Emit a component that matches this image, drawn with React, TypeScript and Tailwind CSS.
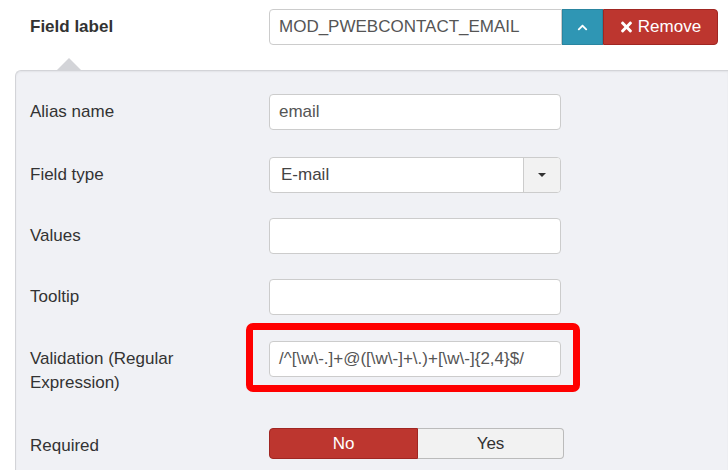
import React from "react";
import { FaChevronUp, FaTimes } from "react-icons/fa";

const font = { fontFamily: '"Liberation Sans", Arial, sans-serif' };

function Row({
  label,
  children,
  className = "",
}: {
  label: React.ReactNode;
  children: React.ReactNode;
  className?: string;
}) {
  return (
    <div className={`flex items-start ${className}`}>
      <label className="w-[239px] shrink-0 pr-[40px] pt-[6px] text-[17px] leading-[24px] text-[#333]">
        {label}
      </label>
      <div className="w-[292px] shrink-0">{children}</div>
    </div>
  );
}

function TextInput({ value = "" }: { value?: string }) {
  return (
    <div className="h-[36px] w-full rounded-[4px] border border-[#ccc] bg-white px-[9px] text-[17px] leading-[34px] text-[#555]">
      {value}
    </div>
  );
}

export default function App() {
  return (
    <div
      className="h-[470px] w-[728px] overflow-hidden bg-white"
      style={font}
    >
      {/* Field label header */}
      <div className="flex items-center pt-[9px] pl-[30px]">
        <div className="w-[239px] text-[17px] font-bold text-[#333]">
          Field label
        </div>
        <div className="flex h-[36px]">
          <div className="w-[293px] rounded-l-[4px] border border-[#ccc] bg-white pl-[9px] text-[17px] leading-[34px] text-[#555]">
            MOD_PWEBCONTACT_EMAIL
          </div>
          <button className="flex w-[41px] items-center justify-center border border-[#2a85a0] bg-[#2f96b4] text-white">
            <FaChevronUp className="h-[11px] w-[11px]" />
          </button>
          <button className="flex w-[115px] items-center justify-center gap-[5px] rounded-r-[4px] border border-[#a02622] bg-[#bd362f] text-[17px] text-white">
            <FaTimes className="h-[16px] w-[13px]" />
            Remove
          </button>
        </div>
      </div>

      {/* Options panel */}
      <div className="relative mt-[25px] ml-[15px] h-[500px] rounded-tl-[6px] border-t border-l border-[#d3d4d8] bg-[#f0f1f5] pt-[23px] pl-[14px] shadow-[inset_0_1px_2px_rgba(0,0,0,0.06)]">
        <div className="absolute -top-[13px] left-[41px] h-0 w-0 border-x-[12px] border-b-[12px] border-x-transparent border-b-[#d3d4d8]" />

        <Row label="Alias name">
          <TextInput value="email" />
        </Row>

        <Row label="Field type" className="mt-[27px]">
          <div className="flex h-[36px] w-full overflow-hidden rounded-[4px] border border-[#ccc] bg-white">
            <div className="flex-1 pl-[11px] text-[17px] leading-[34px] text-[#444]">
              E-mail
            </div>
            <div className="flex w-[37px] items-center justify-center border-l border-[#ccc] bg-[#f2f2f2]">
              <div className="h-0 w-0 border-x-[4px] border-t-[4px] border-x-transparent border-t-[#333]" />
            </div>
          </div>
        </Row>

        <Row label="Values" className="mt-[25px]">
          <TextInput />
        </Row>

        <Row label="Tooltip" className="mt-[25px]">
          <TextInput />
        </Row>

        <Row
          label={
            <>
              Validation (Regular
              <br />
              Expression)
            </>
          }
          className="mt-[26px]"
        >
          <div className="relative">
            <TextInput value="/^[\w\-.]+@([\w\-]+\.)+[\w\-]{2,4}$/" />
            <div className="absolute -top-[18px] -left-[23px] h-[69px] w-[334px] rounded-[7px] border-[7px] border-[#ff0000]" />
          </div>
        </Row>

        <Row label="Required" className="mt-[33px]">
          <div className="flex h-[31px] w-[295px] text-[17px]">
            <button className="w-[149px] rounded-l-[4px] border border-[#a02622] bg-[#bd362f] text-white">
              No
            </button>
            <button className="flex-1 rounded-r-[4px] border border-l-0 border-[#bbb] bg-[#f2f2f2] text-[#333]">
              Yes
            </button>
          </div>
        </Row>
      </div>
    </div>
  );
}
